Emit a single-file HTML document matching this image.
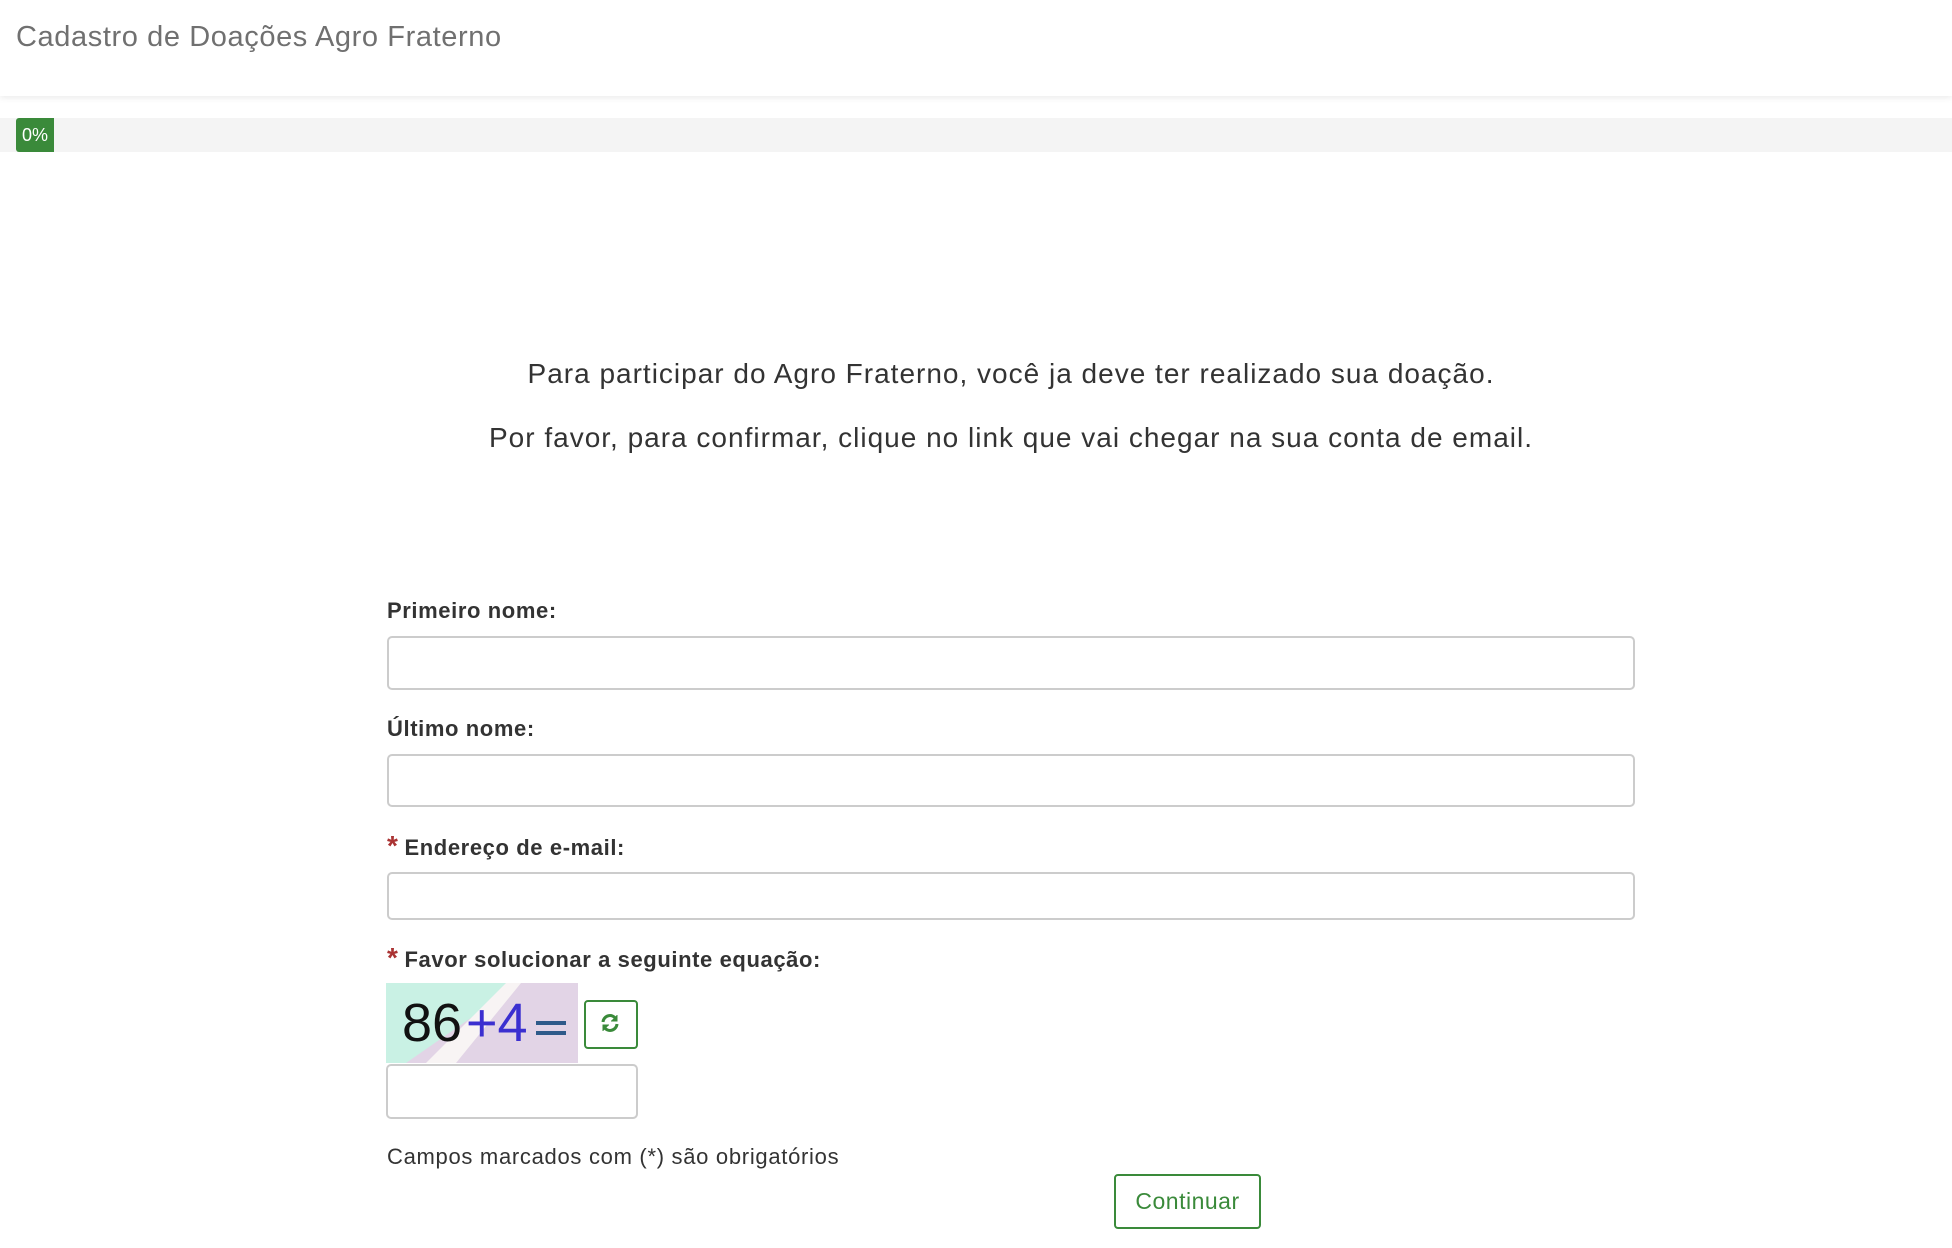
<!DOCTYPE html>
<html><head><meta charset="utf-8"><style>
body{margin:0;width:1952px;height:1248px;background:#fff;font-family:"Liberation Sans",sans-serif;color:#333;position:relative;overflow:hidden}
.abs{position:absolute}
.hdr{left:0;top:0;width:1952px;height:96px;background:#fff;box-shadow:0 2px 6px rgba(0,0,0,.08)}
.title{left:16px;top:21px;font-size:29px;color:#707070;letter-spacing:0.6px}
.bar{left:0;top:118px;width:1952px;height:34px;background:#f4f4f4}
.badge{left:16px;top:118px;width:38px;height:34px;background:#3a8a3a;border-radius:3px 0 0 3px;color:#fff;font-size:18px;line-height:34px;text-align:center}
.c{left:0;width:2022px;text-align:center;font-size:28px;color:#333;letter-spacing:1px}
.lbl{left:387px;font-size:22px;font-weight:bold;color:#333;letter-spacing:0.6px}
.star{color:#a33;font-size:28px;margin-right:6px}
.inp{left:387px;width:1244px;border:2px solid #ccc;border-radius:5px;background:#fff}
</style></head><body>
<div class="abs hdr"></div>
<div class="abs title">Cadastro de Doações Agro Fraterno</div>
<div class="abs bar"></div>
<div class="abs badge">0%</div>
<div class="abs c" style="top:358px">Para participar do Agro Fraterno, você ja deve ter realizado sua doação.</div>
<div class="abs c" style="top:422px">Por favor, para confirmar, clique no link que vai chegar na sua conta de email.</div>
<div class="abs lbl" style="top:598px">Primeiro nome:</div>
<div class="abs inp" style="top:636px;height:50px"></div>
<div class="abs lbl" style="top:716px">Último nome:</div>
<div class="abs inp" style="top:754px;height:49px"></div>
<div class="abs lbl" style="top:830px"><span class="star">*</span>Endereço de e-mail:</div>
<div class="abs inp" style="top:872px;height:44px"></div>
<div class="abs lbl" style="top:942px"><span class="star">*</span>Favor solucionar a seguinte equação:</div>
<svg class="abs" style="left:386px;top:983px" width="192" height="80">
<rect width="192" height="80" fill="#e2d4e6"/>
<polygon points="0,0 135,0 20,80 0,80" fill="#c9f1e4"/>
<polygon points="120,0 135,0 70,80 40,80" fill="#f8f4f4"/>
<text x="16" y="58" font-family="Liberation Sans" font-size="54" fill="#111">86</text>
<text x="80" y="58" font-family="Liberation Sans" font-size="54" fill="#3b2fd0">+4</text>
<rect x="150" y="38" width="30" height="4" fill="#2e5a8a"/><rect x="150" y="48" width="30" height="4" fill="#2e5a8a"/>
</svg>
<div class="abs" style="left:584px;top:1000px;width:50px;height:45px;border:2px solid #3a8a3a;border-radius:4px"></div>
<svg class="abs" style="left:600px;top:1013px" width="20" height="20" viewBox="0 0 20 20" fill="none" stroke="#3a8a3a" stroke-width="3">
<path d="M3 9 A7 7 0 0 1 16 6"/><path d="M17 11 A7 7 0 0 1 4 14"/>
<path d="M17 2 L17 8 L11 8" fill="#3a8a3a" stroke-width="1"/><path d="M3 18 L3 12 L9 12" fill="#3a8a3a" stroke-width="1"/>
</svg>
<div class="abs" style="left:386px;top:1064px;width:248px;height:51px;border:2px solid #ccc;border-radius:5px"></div>
<div class="abs" style="left:387px;top:1144px;font-size:22px;color:#333;letter-spacing:0.7px">Campos marcados com (*) são obrigatórios</div>
<div class="abs" style="left:1114px;top:1174px;width:143px;height:51px;border:2px solid #3a8a3a;border-radius:4px;color:#3a8a3a;font-size:23px;line-height:51px;text-align:center;letter-spacing:0.5px">Continuar</div>
</body></html>
